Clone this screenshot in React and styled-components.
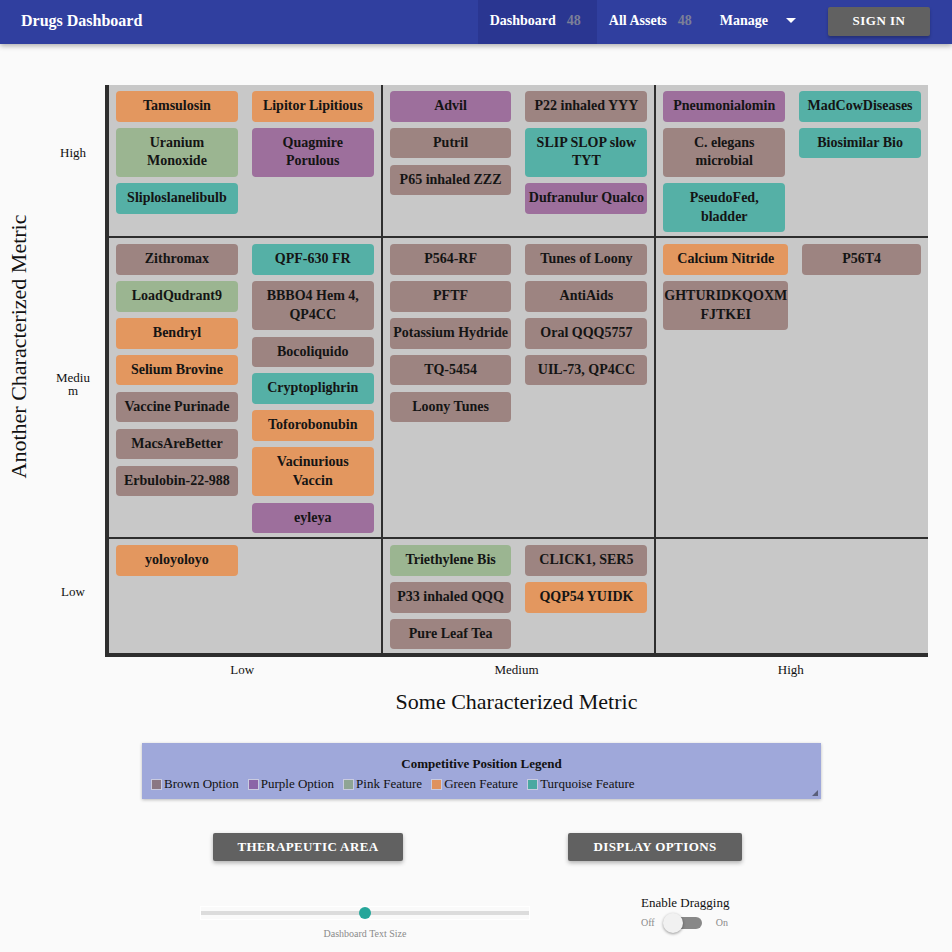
import styled, { createGlobalStyle } from 'styled-components';

const GlobalStyle = createGlobalStyle`
  body {
    margin: 0;
    background: #fafafa;
    font-family: "Liberation Serif", "DejaVu Serif", serif;
    color: #111;
  }
`;

const chipColors = {
  orange: '#e3975f',
  green: '#9bb591',
  purple: '#9d6f9c',
  brown: '#9d8481',
  teal: '#55b0a6',
};

// each row: label + 3 cells, each cell has a left and right stack
const rows = [
  {
    label: 'High',
    cells: [
      [
        [['Tamsulosin', 'orange'], ['Uranium\nMonoxide', 'green'], ['Sliploslanelibulb', 'teal']],
        [['Lipitor Lipitious', 'orange'], ['Quagmire\nPorulous', 'purple']],
      ],
      [
        [['Advil', 'purple'], ['Putril', 'brown'], ['P65 inhaled ZZZ', 'brown']],
        [['P22 inhaled YYY', 'brown'], ['SLIP SLOP slow\nTYT', 'teal'], ['Dufranulur Qualco', 'purple']],
      ],
      [
        [['Pneumonialomin', 'purple'], ['C. elegans\nmicrobial', 'brown'], ['PseudoFed,\nbladder', 'teal']],
        [['MadCowDiseases', 'teal'], ['Biosimilar Bio', 'teal']],
      ],
    ],
  },
  {
    label: 'Medium',
    cells: [
      [
        [
          ['Zithromax', 'brown'], ['LoadQudrant9', 'green'], ['Bendryl', 'orange'], ['Selium Brovine', 'orange'],
          ['Vaccine Purinade', 'brown'], ['MacsAreBetter', 'brown'], ['Erbulobin-22-988', 'brown'],
        ],
        [
          ['QPF-630 FR', 'teal'], ['BBBO4 Hem 4,\nQP4CC', 'brown'], ['Bocoliquido', 'brown'], ['Cryptoplighrin', 'teal'],
          ['Toforobonubin', 'orange'], ['Vacinurious\nVaccin', 'orange'], ['eyleya', 'purple'],
        ],
      ],
      [
        [['P564-RF', 'brown'], ['PFTF', 'brown'], ['Potassium Hydride', 'brown'], ['TQ-5454', 'brown'], ['Loony Tunes', 'brown']],
        [['Tunes of Loony', 'brown'], ['AntiAids', 'brown'], ['Oral QQQ5757', 'brown'], ['UIL-73, QP4CC', 'brown']],
      ],
      [
        [['Calcium Nitride', 'orange'], ['GHTURIDKQOXM\nFJTKEI', 'brown']],
        [['P56T4', 'brown']],
      ],
    ],
  },
  {
    label: 'Low',
    cells: [
      [[['yoloyoloyo', 'orange']], []],
      [
        [['Triethylene Bis', 'green'], ['P33 inhaled QQQ', 'brown'], ['Pure Leaf Tea', 'brown']],
        [['CLICK1, SER5', 'brown'], ['QQP54 YUIDK', 'orange']],
      ],
      [[], []],
    ],
  },
];

const legendItems = [
  ['Brown Option', '#8a7783'],
  ['Purple Option', '#8b65a7'],
  ['Pink Feature', '#8fa595'],
  ['Green Feature', '#df925e'],
  ['Turquoise Feature', '#4aa8a1'],
];

const TopBar = styled.header`
  height: 44px;
  display: flex;
  align-items: stretch;
  background: #303f9f;
  box-shadow: 0 2px 5px rgba(0, 0, 0, 0.3);
  color: #fff;
  font-weight: bold;
  font-size: 14px;
`;

const Brand = styled.div`
  display: flex;
  align-items: center;
  padding: 0 0 3px 21px;
  font-size: 16px;
  flex: 1;
`;

const NavTab = styled.div`
  display: flex;
  align-items: center;
  padding: 0 16px 3px 12px;
  background: ${(p) => (p.$active ? '#2a3691' : 'transparent')};
`;

const Count = styled.span`
  margin-left: 11px;
  color: #7b7f98;
`;

const Caret = styled.span`
  margin-left: 18px;
  width: 0;
  height: 0;
  border-left: 5px solid transparent;
  border-right: 5px solid transparent;
  border-top: 5px solid #fff;
`;

const SignIn = styled.button`
  align-self: center;
  margin: 0 22px 2px 16px;
  width: 102px;
  height: 29px;
  border: none;
  border-radius: 2px;
  background: #616161;
  color: #fff;
  font-family: inherit;
  font-weight: bold;
  font-size: 13px;
  letter-spacing: 0.5px;
  box-shadow: 0 2px 3px rgba(0, 0, 0, 0.25);
`;

const Main = styled.main`
  padding-top: 41px;
`;

const Chart = styled.div`
  display: flex;
`;

const YTitle = styled.div`
  width: 38px;
  display: flex;
  align-items: center;
  justify-content: center;
  padding-top: 50px;
  writing-mode: vertical-rl;
  transform: rotate(180deg);
  font-size: 22px;
  white-space: nowrap;
`;

const Rows = styled.div`
  display: flex;
  flex-direction: column;
`;

const MatrixRow = styled.div`
  display: flex;
`;

const Tick = styled.div`
  width: 67px;
  display: flex;
  align-items: center;
  justify-content: center;
  padding: 0 0 ${(p) => p.$lift}px 3px;
  box-sizing: border-box;
`;

const TickText = styled.span`
  width: 36px;
  text-align: center;
  font-size: 13px;
  line-height: 13px;
  word-break: break-all;
`;

const Cells = styled.div`
  width: 823px;
  box-sizing: border-box;
  display: grid;
  grid-template-columns: repeat(3, 1fr);
  column-gap: 2px;
  background: #2e2e2e;
  border-left: 4px solid #2e2e2e;
  border-bottom: ${(p) => (p.$last ? 4 : 2)}px solid #2e2e2e;
`;

const Cell = styled.div`
  background: #c8c8c8;
  display: grid;
  grid-template-columns: 1fr 1fr;
  column-gap: 14px;
  align-items: start;
  padding: 6px 7px 4px 7px;
`;

const Stack = styled.div`
  display: flex;
  flex-direction: column;
  gap: 6.4px;
`;

const Chip = styled.div`
  background: ${(p) => chipColors[p.$color]};
  border-radius: 4px;
  padding: 6px 1px;
  text-align: center;
  white-space: pre-line;
  font-weight: bold;
  font-size: 14px;
  line-height: 18.5px;
  color: #141414;
`;

const XLabels = styled.div`
  margin: 5px 0 0 105px;
  width: 823px;
  display: grid;
  grid-template-columns: repeat(3, 1fr);
  font-size: 13px;
  line-height: 16px;
  text-align: center;
`;

const XTitle = styled.div`
  margin: 11px 0 0 105px;
  width: 823px;
  text-align: center;
  font-size: 22px;
  line-height: 26px;
`;

const Legend = styled.div`
  position: relative;
  margin: 28px 131px 0 142px;
  padding: 13px 9px 7px;
  background: #9fa8da;
  box-shadow: 0 1px 3px rgba(0, 0, 0, 0.25);
  font-size: 13px;
  line-height: 16px;
`;

const LegendTitle = styled.div`
  text-align: center;
  font-weight: bold;
  margin-bottom: 4px;
`;

const LegendList = styled.div`
  display: flex;
  gap: 9px;
`;

const LegendItem = styled.span`
  display: flex;
  align-items: center;
`;

const Swatch = styled.span`
  width: 9px;
  height: 9px;
  margin-right: 2px;
  background: ${(p) => p.$color};
  border: 1px solid #c9cbe0;
`;

const ResizeGrip = styled.span`
  position: absolute;
  right: 3px;
  bottom: 3px;
  width: 0;
  height: 0;
  border-left: 6px solid transparent;
  border-bottom: 6px solid #5a5f7a;
`;

const ButtonRow = styled.div`
  display: flex;
  gap: 165px;
  margin-top: 34px;
  padding-left: 213px;
`;

const ActionButton = styled.button`
  width: ${(p) => p.$width}px;
  height: 28px;
  border: none;
  border-radius: 2px;
  background: #616161;
  color: #fff;
  font-family: inherit;
  font-weight: bold;
  font-size: 13px;
  letter-spacing: 0.4px;
  box-shadow: 0 2px 4px rgba(0, 0, 0, 0.3);
`;

const Controls = styled.div`
  display: flex;
  gap: 111px;
  margin-top: 34px;
  padding-left: 200px;
`;

const SliderBlock = styled.div`
  width: 330px;
  padding-top: 11px;
  display: flex;
  flex-direction: column;
  align-items: center;
`;

const SliderBox = styled.div`
  position: relative;
  width: 100%;
  height: 14px;
  box-sizing: border-box;
  border: 1px solid #fff;
  display: flex;
  align-items: center;
`;

const Track = styled.div`
  width: 100%;
  height: 4px;
  background: #dcdcdc;
`;

const Thumb = styled.span`
  position: absolute;
  top: 50%;
  width: 12px;
  height: 12px;
  margin: -6px 0 0 -6px;
  border-radius: 50%;
  background: #26a69a;
`;

const SmallLabel = styled.span`
  font-size: 10px;
  color: #8a8a8a;
`;

const SliderLabel = styled(SmallLabel)`
  margin-top: 8px;
`;

const ToggleBlock = styled.div`
  display: flex;
  flex-direction: column;
  font-size: 13px;
  line-height: 16px;
`;

const ToggleRow = styled.div`
  display: flex;
  align-items: center;
  height: 20px;
  margin-top: 2px;
`;

const Switch = styled.span`
  position: relative;
  width: 30px;
  height: 12px;
  margin: 0 14px 0 17px;
  border-radius: 6px;
  background: #888;
`;

const Knob = styled.span`
  position: absolute;
  left: -9px;
  top: -4px;
  width: 20px;
  height: 20px;
  border-radius: 50%;
  background: #f1f1f1;
  box-shadow: 0 1px 3px rgba(0, 0, 0, 0.4);
`;

const tickLift = { High: 18, Medium: 10, Low: 14 };

export default function App() {
  const sliderValue = 0.5;

  return (
    <>
      <GlobalStyle />
      <TopBar>
        <Brand>Drugs Dashboard</Brand>
        <NavTab $active>Dashboard<Count>48</Count></NavTab>
        <NavTab>All Assets<Count>48</Count></NavTab>
        <NavTab>Manage<Caret /></NavTab>
        <SignIn>SIGN IN</SignIn>
      </TopBar>

      <Main>
        <Chart>
          <YTitle>Another Characterized Metric</YTitle>
          <Rows>
            {rows.map((row, ri) => (
              <MatrixRow key={row.label}>
                <Tick $lift={tickLift[row.label]}><TickText>{row.label}</TickText></Tick>
                <Cells $last={ri === rows.length - 1}>
                  {row.cells.map((cell, ci) => (
                    <Cell key={ci}>
                      {cell.map((stack, si) => (
                        <Stack key={si}>
                          {stack.map(([name, color]) => (
                            <Chip key={name} $color={color}>{name}</Chip>
                          ))}
                        </Stack>
                      ))}
                    </Cell>
                  ))}
                </Cells>
              </MatrixRow>
            ))}
          </Rows>
        </Chart>

        <XLabels>
          <span>Low</span>
          <span>Medium</span>
          <span>High</span>
        </XLabels>
        <XTitle>Some Characterized Metric</XTitle>

        <Legend>
          <LegendTitle>Competitive Position Legend</LegendTitle>
          <LegendList>
            {legendItems.map(([label, color]) => (
              <LegendItem key={label}>
                <Swatch $color={color} />
                {label}
              </LegendItem>
            ))}
          </LegendList>
          <ResizeGrip />
        </Legend>

        <ButtonRow>
          <ActionButton $width={190}>THERAPEUTIC AREA</ActionButton>
          <ActionButton $width={174}>DISPLAY OPTIONS</ActionButton>
        </ButtonRow>

        <Controls>
          <SliderBlock>
            <SliderBox>
              <Track />
              <Thumb style={{ left: `${sliderValue * 100}%` }} />
            </SliderBox>
            <SliderLabel>Dashboard Text Size</SliderLabel>
          </SliderBlock>
          <ToggleBlock>
            Enable Dragging
            <ToggleRow>
              <SmallLabel>Off</SmallLabel>
              <Switch><Knob /></Switch>
              <SmallLabel>On</SmallLabel>
            </ToggleRow>
          </ToggleBlock>
        </Controls>
      </Main>
    </>
  );
}
